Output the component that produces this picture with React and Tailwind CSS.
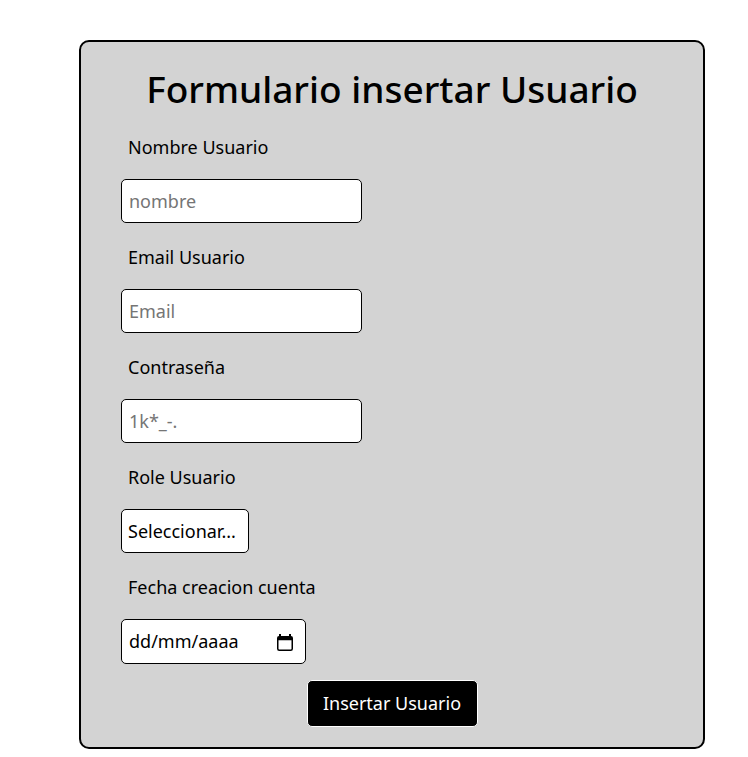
import { useState } from "react";

const fields = [
    { label: "Nombre Usuario", type: "text", placeholder: "nombre" },
    { label: "Email Usuario", type: "email", placeholder: "Email" },
    { label: "Contraseña", type: "password", placeholder: "1k*_-." },
];

const CalendarIcon = () => (
    <svg width="20" height="20" viewBox="0 0 20 20" fill="none">
        <rect x="4" y="2" width="2" height="3" fill="#000" />
        <rect x="14" y="2" width="2" height="3" fill="#000" />
        <rect x="2.75" y="4.75" width="14.5" height="13.5" rx="1.5" stroke="#000" strokeWidth="1.5" />
        <rect x="2.75" y="4.75" width="14.5" height="3.5" fill="#000" />
    </svg>
);

const App = () => {
    const [role, setRole] = useState("");

    return (
        <div className="min-h-screen bg-white pt-[40px] pl-[79px] font-['Noto_Sans',sans-serif] text-black">
            <form
                className="w-[626px] rounded-[10px] border-2 border-black bg-[#d3d3d3] pb-[20px]"
                onSubmit={(e) => e.preventDefault()}
            >
                <h1 className="mb-[21px] pt-[22px] text-center text-[37px] leading-[50px] font-medium">
                    Formulario insertar Usuario
                </h1>

                <div className="pl-[40px]">
                    {fields.map((f) => (
                        <div key={f.label} className="mb-[22px]">
                            <label className="mb-[20px] block pl-[7px] text-[18px] leading-[24px]">
                                {f.label}
                            </label>
                            <input
                                type={f.type === "password" ? "text" : f.type}
                                placeholder={f.placeholder}
                                className="h-[44px] w-[241px] rounded-[5px] border border-black bg-white px-[7px] text-[18px] outline-none placeholder:text-[#757575]"
                            />
                        </div>
                    ))}

                    {/* Role */}
                    <div className="mb-[22px]">
                        <label className="mb-[20px] block pl-[7px] text-[18px] leading-[24px]">
                            Role Usuario
                        </label>
                        <select
                            value={role}
                            onChange={(e) => setRole(e.target.value)}
                            className="h-[44px] w-[128px] appearance-none rounded-[5px] border border-black bg-white px-[6px] text-[18px] outline-none"
                        >
                            <option value="">Seleccionar...</option>
                            <option value="admin">Admin</option>
                            <option value="user">Usuario</option>
                        </select>
                    </div>

                    {/* Fecha */}
                    <div>
                        <label className="mb-[20px] block pl-[7px] text-[18px] leading-[24px]">
                            Fecha creacion cuenta
                        </label>
                        <div className="flex h-[45px] w-[185px] items-center justify-between rounded-[5px] border border-black bg-white pl-[7px] pr-[10px] text-[18px]">
                            <span>dd/mm/aaaa</span>
                            <CalendarIcon />
                        </div>
                    </div>
                </div>

                <div className="mt-[16px] flex justify-center">
                    <button
                        type="submit"
                        className="h-[47px] w-[171px] rounded-[5px] border border-white bg-black text-[18px] text-white"
                    >
                        Insertar Usuario
                    </button>
                </div>
            </form>
        </div>
    );
};

export default App;
